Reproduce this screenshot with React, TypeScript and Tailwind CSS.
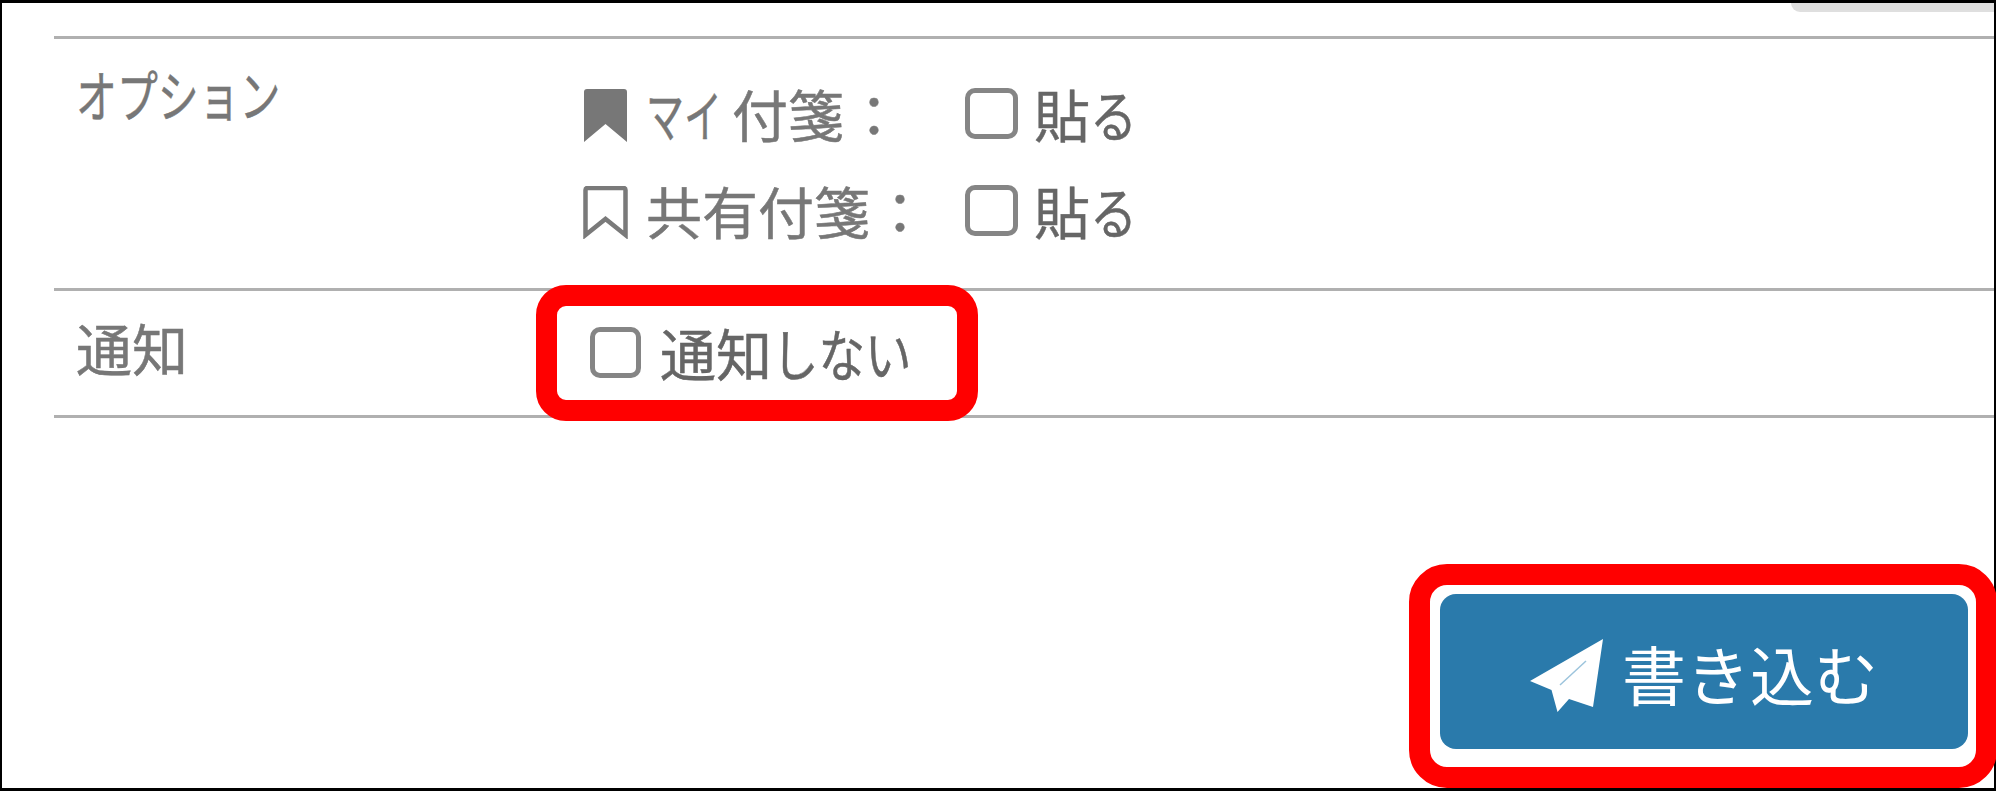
import type { ReactNode } from "react";

const font = "font-['Noto_Sans_CJK_JP','Noto_Sans_CJK_SC',sans-serif]";

function Checkbox({ className = "" }: { className?: string }) {
    return <span className={`block shrink-0 rounded-[10px] border-[5px] border-[#858585] bg-white ${className}`}></span>;
}

function BookmarkFilled() {
    return (
        <svg width="45" height="53" viewBox="0 0 45 53" className="shrink-0">
            <path d="M1 3Q1 0 4 0H41Q44 0 44 3V53L22.5 35L1 53Z" fill="#777777" />
        </svg>
    );
}

function BookmarkOutline() {
    return (
        <svg width="45" height="53" viewBox="0 0 45 53" className="shrink-0">
            <path d="M2.500 4Q2.500 2 4.500 2H40.500Q42.500 2 42.500 4V49L22.500 33L2.500 49Z" fill="none" stroke="#7a7a7a" strokeWidth="4.500" />
        </svg>
    );
}

function PaperPlane() {
    return (
        <svg width="73" height="73" viewBox="0 0 73 73" className="mt-[8px] shrink-0">
            <path d="M73 0L0 42L21.500 51L27.500 73L39 60L63 68Z" fill="#ffffff" />
            <path d="M56 22L30 46" stroke="#9cc4dc" strokeWidth="1.500" fill="none" />
        </svg>
    );
}

// kana in the original UI font is much narrower than Noto, so squeeze it
function Narrow({ w, className, children }: { w: string; className: string; children: ReactNode }) {
    return <span className={`inline-block shrink-0 origin-left whitespace-nowrap ${w} ${className}`}>{children}</span>;
}

function StickyRow({ icon, label }: { icon: ReactNode; label: ReactNode }) {
    return (
        <div className="flex h-[53px] items-center">
            <div className="flex w-[382px] items-center">
                {icon}
                <div className="mt-[-5px] ml-[18px] flex items-center text-[56px] leading-[56px] text-[#777777] [-webkit-text-stroke:0.5px]">{label}</div>
            </div>
            <Checkbox className="mt-[-4px] h-[51px] w-[53px]" />
            <div className="mt-[-5px] ml-[16px] flex items-center text-[56px] leading-[56px] text-[#666666] [-webkit-text-stroke:0.5px]">
                貼<Narrow w="w-[47px]" className="scale-x-[0.84]">る</Narrow>
            </div>
        </div>
    );
}

export default function App() {
    return (
        <div className={`flex h-[791px] w-[1996px] flex-col border-x-[2px] border-t-[3px] border-b-[3px] border-black bg-white ${font}`}>
            <div className="flex h-[9px] justify-end">
                <div className="w-[203px] rounded-bl-[14px] bg-[#dfdfdf]"></div>
            </div>

            <div className="mt-[24px] ml-[52px]">
                <div className="grid h-[252px] grid-cols-[529px_1fr] border-t-[3px] border-[#b0b0b0]">
                    <div className="pt-[24px] pl-[22px] text-[56px] leading-[60px] text-[#777777] [-webkit-text-stroke:0.5px]">
                        <Narrow w="w-[204px]" className="scale-x-[0.73]">オプション</Narrow>
                    </div>
                    <div className="flex flex-col gap-y-[44px] pt-[50px]">
                        <StickyRow
                            icon={<BookmarkFilled />}
                            label={
                                <>
                                    <Narrow w="w-[86px]" className="scale-x-[0.68]">マイ</Narrow>
                                    <span>付箋</span>
                                    <span className="ml-[2px]">：</span>
                                </>
                            }
                        />
                        <StickyRow
                            icon={<BookmarkOutline />}
                            label={
                                <>
                                    <span>共有付箋</span>
                                    <span className="ml-[2px]">：</span>
                                </>
                            }
                        />
                    </div>
                </div>

                <div className="grid h-[130px] grid-cols-[529px_1fr] border-y-[3px] border-[#b0b0b0]">
                    <div className="pt-[26px] pl-[22px] text-[56px] leading-[60px] text-[#777777] [-webkit-text-stroke:0.5px]">通知</div>
                    <div className="pt-[35px] pl-[7px]">
                        <div className="relative inline-flex h-[52px] items-center">
                            <Checkbox className="h-[51px] w-[51px]" />
                            <div className="ml-[19px] flex w-[252px] items-center text-[56px] leading-[56px] text-[#666666] [-webkit-text-stroke:0.5px]">
                                通知<Narrow w="w-[140px]" className="scale-x-[0.83]">しない</Narrow>
                            </div>
                            <div className="pointer-events-none absolute top-[-41px] right-[-66px] bottom-[-43px] left-[-54px] rounded-[30px] border-[21px] border-[#ff0000]"></div>
                        </div>
                    </div>
                </div>
            </div>

            <div className="mt-[176px] mr-[26px] flex justify-end">
                <div className="relative flex h-[155px] w-[528px] items-center justify-center gap-x-[19px] rounded-[16px] bg-[#2a7aab] text-[64px] leading-[64px] text-white">
                    <PaperPlane />
                    <span>書き込む</span>
                    <div className="pointer-events-none absolute top-[-30px] right-[-29px] bottom-[-39px] left-[-31px] rounded-[38px] border-[21px] border-[#ff0000]"></div>
                </div>
            </div>
        </div>
    );
}
